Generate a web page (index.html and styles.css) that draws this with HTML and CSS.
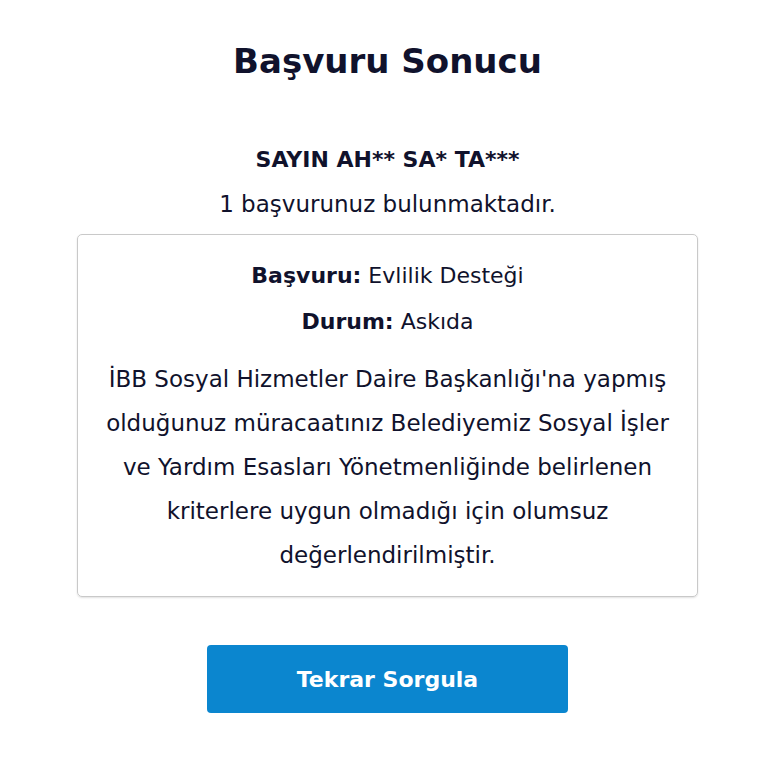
FILE: index.html
```html
<!DOCTYPE html>
<html lang="tr">

<head>
    <meta charset="UTF-8">
    <meta name="viewport" content="width=device-width, initial-scale=1.0">
    <title>Başvuru Sonucu</title>
    <link rel="stylesheet" href="styles.css">
</head>

<body>

    <div class="result">
        <h1>Başvuru Sonucu</h1>

        <div class="person">SAYIN AH** SA* TA***</div>
        <div class="count">1 başvurunuz bulunmaktadır.</div>

        <div class="card">
            <p class="row"><b>Başvuru:</b> Evlilik Desteği</p>
            <p class="row"><b>Durum:</b> Askıda</p>
            <p class="desc">İBB Sosyal Hizmetler Daire Başkanlığı'na yapmış olduğunuz müracaatınız Belediyemiz Sosyal İşler ve Yardım Esasları Yönetmenliğinde belirlenen kriterlere uygun olmadığı için olumsuz değerlendirilmiştir.</p>
        </div>

        <button class="retry">Tekrar Sorgula</button>
    </div>

</body>

</html>
```

FILE: styles.css
```css
body {
    margin: 0;
    padding: 0 0 0 7px;
    font-family: "DejaVu Sans", "Noto Sans", sans-serif;
    color: #10122c;
    background-color: #fff;
}

.result {
    width: 621px;
    margin: 0 auto;
    display: flex;
    flex-direction: column;
    align-items: center;
    text-align: center;
}

.result h1 {
    margin: 36px 0 0;
    font-size: 34px;
    line-height: 50px;
    font-weight: bold;
}

.person {
    margin-top: 60px;
    font-size: 22px;
    font-weight: bold;
    line-height: 28px;
}

.count {
    margin-top: 16px;
    font-size: 23px;
    line-height: 28px;
}

.card {
    box-sizing: border-box;
    width: 100%;
    margin-top: 16px;
    padding: 18px 16px 19px;
    border: 1px solid #c9c9c9;
    border-radius: 5px;
    box-shadow: 0 1px 2px rgba(0, 0, 0, 0.12);
}

.card p {
    margin: 0;
    font-size: 22px;
}

.card .row {
    line-height: 46px;
}

.card .desc {
    margin-top: 12px;
    font-size: 23px;
    line-height: 44px;
}

/* tekrar sorgu butonu */
.retry {
    margin-top: 48px;
    width: 361px;
    height: 68px;
    border: none;
    border-radius: 4px;
    background-color: #0b86cf;
    color: #fff;
    font-family: inherit;
    font-size: 22px;
    font-weight: bold;
    cursor: pointer;
}
```
